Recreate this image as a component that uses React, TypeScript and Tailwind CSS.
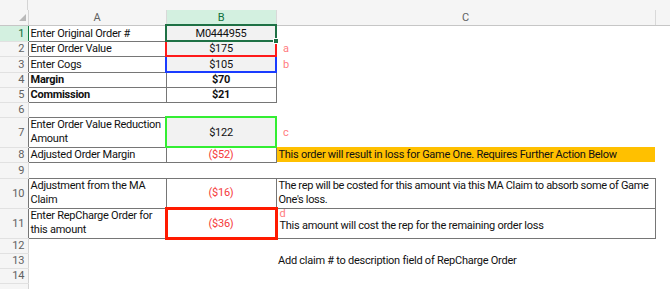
type RH = { n?: number; edge?: string; active?: boolean };

function RowHead({ n, edge = "border-r-[#d4d4d4]", active = false }: RH) {
  return (
    <td
      className={`border-r border-b border-b-[#e1e1e1] ${edge} ${
        active ? "bg-[#d3f0e0] text-[#0f703b]" : "bg-[#f5f5f5] text-[#616161]"
      } text-right pr-[3px] align-middle tracking-normal`}
    >
      {n}
    </td>
  );
}

const line = "border-[#767676]";
const aCell = `border-r border-b ${line} px-[2px] align-middle whitespace-nowrap`;
const bCell = `border-r border-b ${line} px-[2px] text-center align-middle`;
const note = "pl-[6px] text-[#ff7c80] align-middle";
const two = "leading-[14.5px]";

export default function App() {
  return (
    <div className="w-[670px] h-[289px] overflow-hidden bg-white text-[11px] leading-[13px] tracking-[-0.25px] text-[#111] [font-family:Roboto,sans-serif]">
      <div className="flex h-[10px] bg-[#f5f5f5]">
        <div className="w-[28px] border-r border-[#d4d4d4]" />
      </div>
      <table className="table-fixed border-collapse w-[670px]">
        <colgroup>
          <col className="w-[28px]" />
          <col className="w-[138px]" />
          <col className="w-[110px]" />
          <col className="w-[379px]" />
          <col />
        </colgroup>
        <thead>
          <tr className="h-[15px]">
            <th className="bg-[#f5f5f5] border-r border-[#d4d4d4] border-b border-b-[#c6c6c6] p-0">
              <div className="flex h-[14px] items-end justify-end pr-[2px] pb-[3px]">
                <svg width="7" height="7" viewBox="0 0 7 7">
                  <polygon points="7,0 7,7 0,7" fill="#b9b9b9" />
                </svg>
              </div>
            </th>
            <th className="bg-[#f5f5f5] font-normal text-[#616161] border-r border-[#d9d9d9] border-b border-b-[#c6c6c6]">
              A
            </th>
            <th className="bg-[#d3f0e0] font-normal text-[#0f703b] border-r border-[#d9d9d9] border-b border-b-[#c6c6c6]">
              B
            </th>
            <th className="bg-[#f5f5f5] font-normal text-[#616161] border-r border-[#d9d9d9] border-b border-b-[#c6c6c6]">
              C
            </th>
            <th className="bg-[#f5f5f5] border-b border-b-[#c6c6c6]" />
          </tr>
        </thead>
        <tbody>
          <tr className="h-[16px]">
            <RowHead n={1} active edge="border-r-[#107c41]" />
            <td className={aCell}>Enter Original Order #</td>
            <td className="relative border-2 border-[#1e7145] bg-[#f2f2f2] px-[2px] text-center align-middle">
              M0444955
              <span className="absolute -right-[4px] -bottom-[4px] h-[6px] w-[6px] border border-white bg-[#1e7145]" />
            </td>
            <td />
            <td />
          </tr>
          <tr className="h-[15px]">
            <RowHead n={2} edge="border-r-[#767676]" />
            <td className={aCell}>Enter Order Value</td>
            <td className="border-2 border-[#ff1a1a] bg-[#f2f2f2] px-[2px] text-center align-middle">$175</td>
            <td className={note}>a</td>
            <td />
          </tr>
          <tr className="h-[16px]">
            <RowHead n={3} edge="border-r-[#767676]" />
            <td className={aCell}>Enter Cogs</td>
            <td className="border-2 border-[#1a3cff] bg-[#f2f2f2] px-[2px] text-center align-middle">$105</td>
            <td className={note}>b</td>
            <td />
          </tr>
          <tr className="h-[15px]">
            <RowHead n={4} edge="border-r-[#767676]" />
            <td className={`${aCell} font-bold`}>Margin</td>
            <td className={`${bCell} font-bold`}>$70</td>
            <td />
            <td />
          </tr>
          <tr className="h-[15px]">
            <RowHead n={5} edge="border-r-[#767676]" />
            <td className={`${aCell} font-bold`}>Commission</td>
            <td className={`${bCell} font-bold`}>$21</td>
            <td />
            <td />
          </tr>
          <tr className="h-[15px]">
            <RowHead n={6} />
            <td />
            <td />
            <td />
            <td />
          </tr>
          <tr className="h-[30px]">
            <RowHead n={7} edge="border-r-[#767676]" />
            <td className={`${aCell} border-t ${two}`}>
              Enter Order Value Reduction
              <br />
              Amount
            </td>
            <td className="border-2 border-[#33ee33] bg-[#f2f2f2] px-[2px] text-center align-middle">$122</td>
            <td className={note}>c</td>
            <td />
          </tr>
          <tr className="h-[15px]">
            <RowHead n={8} edge="border-r-[#767676]" />
            <td className={aCell}>Adjusted Order Margin</td>
            <td className={`${bCell} text-[#f53b3b]`}>($52)</td>
            <td className="bg-[#ffc000] px-[2px] align-middle whitespace-nowrap">
              This order will result in loss for Game One. Requires Further Action Below
            </td>
            <td />
          </tr>
          <tr className="h-[16px]">
            <RowHead n={9} />
            <td />
            <td />
            <td />
            <td />
          </tr>
          <tr className="h-[30px]">
            <RowHead n={10} edge="border-r-[#767676]" />
            <td className={`${aCell} border-t ${two}`}>
              Adjustment from the MA
              <br />
              Claim
            </td>
            <td className={`${bCell} border-t text-[#f53b3b]`}>($16)</td>
            <td className={`border border-[#767676] px-[2px] align-middle whitespace-nowrap tracking-[-0.33px] ${two}`}>
              The rep will be costed for this amount via this MA Claim to absorb some of Game
              <br />
              One's loss.
            </td>
            <td />
          </tr>
          <tr className="h-[30px]">
            <RowHead n={11} edge="border-r-[#767676]" />
            <td className={`${aCell} ${two}`}>
              Enter RepCharge Order for
              <br />
              this amount
            </td>
            <td className="border-[3px] border-[#ff1a00] px-[2px] text-center align-middle text-[#f53b3b]">($36)</td>
            <td className="border border-[#767676] px-[2px] align-top whitespace-nowrap">
              <div className="leading-[10px] text-[#ff7c80]">d</div>
              <div className="leading-[14px]">This amount will cost the rep for the remaining order loss</div>
            </td>
            <td />
          </tr>
          <tr className="h-[15px]">
            <RowHead n={12} />
            <td />
            <td />
            <td />
            <td />
          </tr>
          <tr className="h-[15px]">
            <RowHead n={13} />
            <td />
            <td />
            <td className="px-[2px] align-middle whitespace-nowrap">Add claim # to description field of RepCharge Order</td>
            <td />
          </tr>
          <tr className="h-[15px]">
            <RowHead n={14} />
            <td />
            <td />
            <td />
            <td />
          </tr>
          <tr className="h-[15px]">
            <RowHead />
            <td />
            <td />
            <td />
            <td />
          </tr>
        </tbody>
      </table>
    </div>
  );
}
